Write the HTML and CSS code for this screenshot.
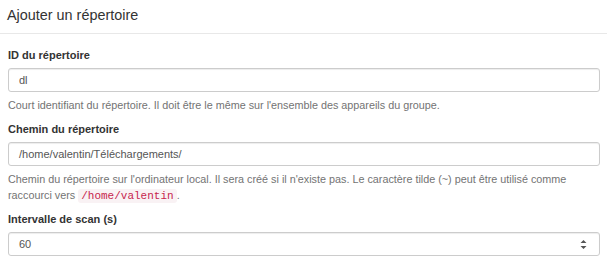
FILE: index.html
```html
<!DOCTYPE html>
<html lang="fr">
<head>
  <meta charset="UTF-8" />
  <title>Ajouter un répertoire</title>
  <link rel="stylesheet" href="styles.css">
</head>
<body>
  <div class="modal">
    <div class="modal-header">
      <h4>Ajouter un répertoire</h4>
    </div>

    <div class="modal-body">
      <!-- Folder ID -->
      <div class="form-group">
        <label>ID du répertoire</label>
        <div class="form-control">dl</div>
        <p class="help">Court identifiant du répertoire. Il doit être le même sur l'ensemble des appareils du groupe.</p>
      </div>

      <!-- Folder path -->
      <div class="form-group">
        <label>Chemin du répertoire</label>
        <div class="form-control">/home/valentin/Téléchargements/</div>
        <p class="help">Chemin du répertoire sur l'ordinateur local. Il sera créé si il n'existe pas. Le caractère tilde (~) peut être utilisé comme raccourci vers <code>/home/valentin</code>.</p>
      </div>

      <!-- Rescan interval -->
      <div class="form-group">
        <label>Intervalle de scan (s)</label>
        <div class="form-control number">
          <span>60</span>
          <span class="spin">
            <svg width="7" height="11" viewBox="0 0 7 11"><path d="M3.5 1 L6.5 4 L0.5 4 Z M0.5 7 L6.5 7 L3.5 10 Z" fill="#555"/></svg>
          </span>
        </div>
      </div>
    </div>
  </div>
</body>
</html>
```

FILE: styles.css
```css
body {
  margin: 0;
  font-family: 'Liberation Sans', Arial, sans-serif;
  font-size: 11px;
  color: #333;
  background: #fff;
}

.modal-header {
  padding: 5px 7px 0;
  height: 28px;
  border-bottom: 1px solid #e8e8e8;
}

.modal-header h4 {
  margin: 0;
  font-size: 14.4px;
  font-weight: normal;
  line-height: 20px;
  color: #333;
}

.modal-body {
  padding: 14px 7px 0 8px;
}

.form-group {
  margin-bottom: 9px;
}

label {
  display: block;
  font-weight: bold;
  font-size: 11px;
  line-height: 14px;
  margin-bottom: 6px;
}

.form-control {
  box-sizing: border-box;
  height: 24px;
  padding: 0 10px;
  border: 1px solid #ccc;
  border-radius: 3px;
  box-shadow: inset 0 1px 1px rgba(0,0,0,0.075);
  font-size: 11px;
  line-height: 22px;
  color: #555;
}

.number {
  display: flex;
  justify-content: space-between;
  align-items: center;
  padding-right: 12px;
}

.spin {
  display: flex;
}

.help {
  margin: 5px 0 0;
  font-size: 10.8px;
  line-height: 16px;
  color: #737373;
}

code {
  font-family: 'Liberation Mono', 'DejaVu Sans Mono', monospace;
  font-size: 11px;
  line-height: 1;
  padding: 1px 3px;
  color: #c7254e;
  background: #f9f2f4;
  border-radius: 3px;
}
```
